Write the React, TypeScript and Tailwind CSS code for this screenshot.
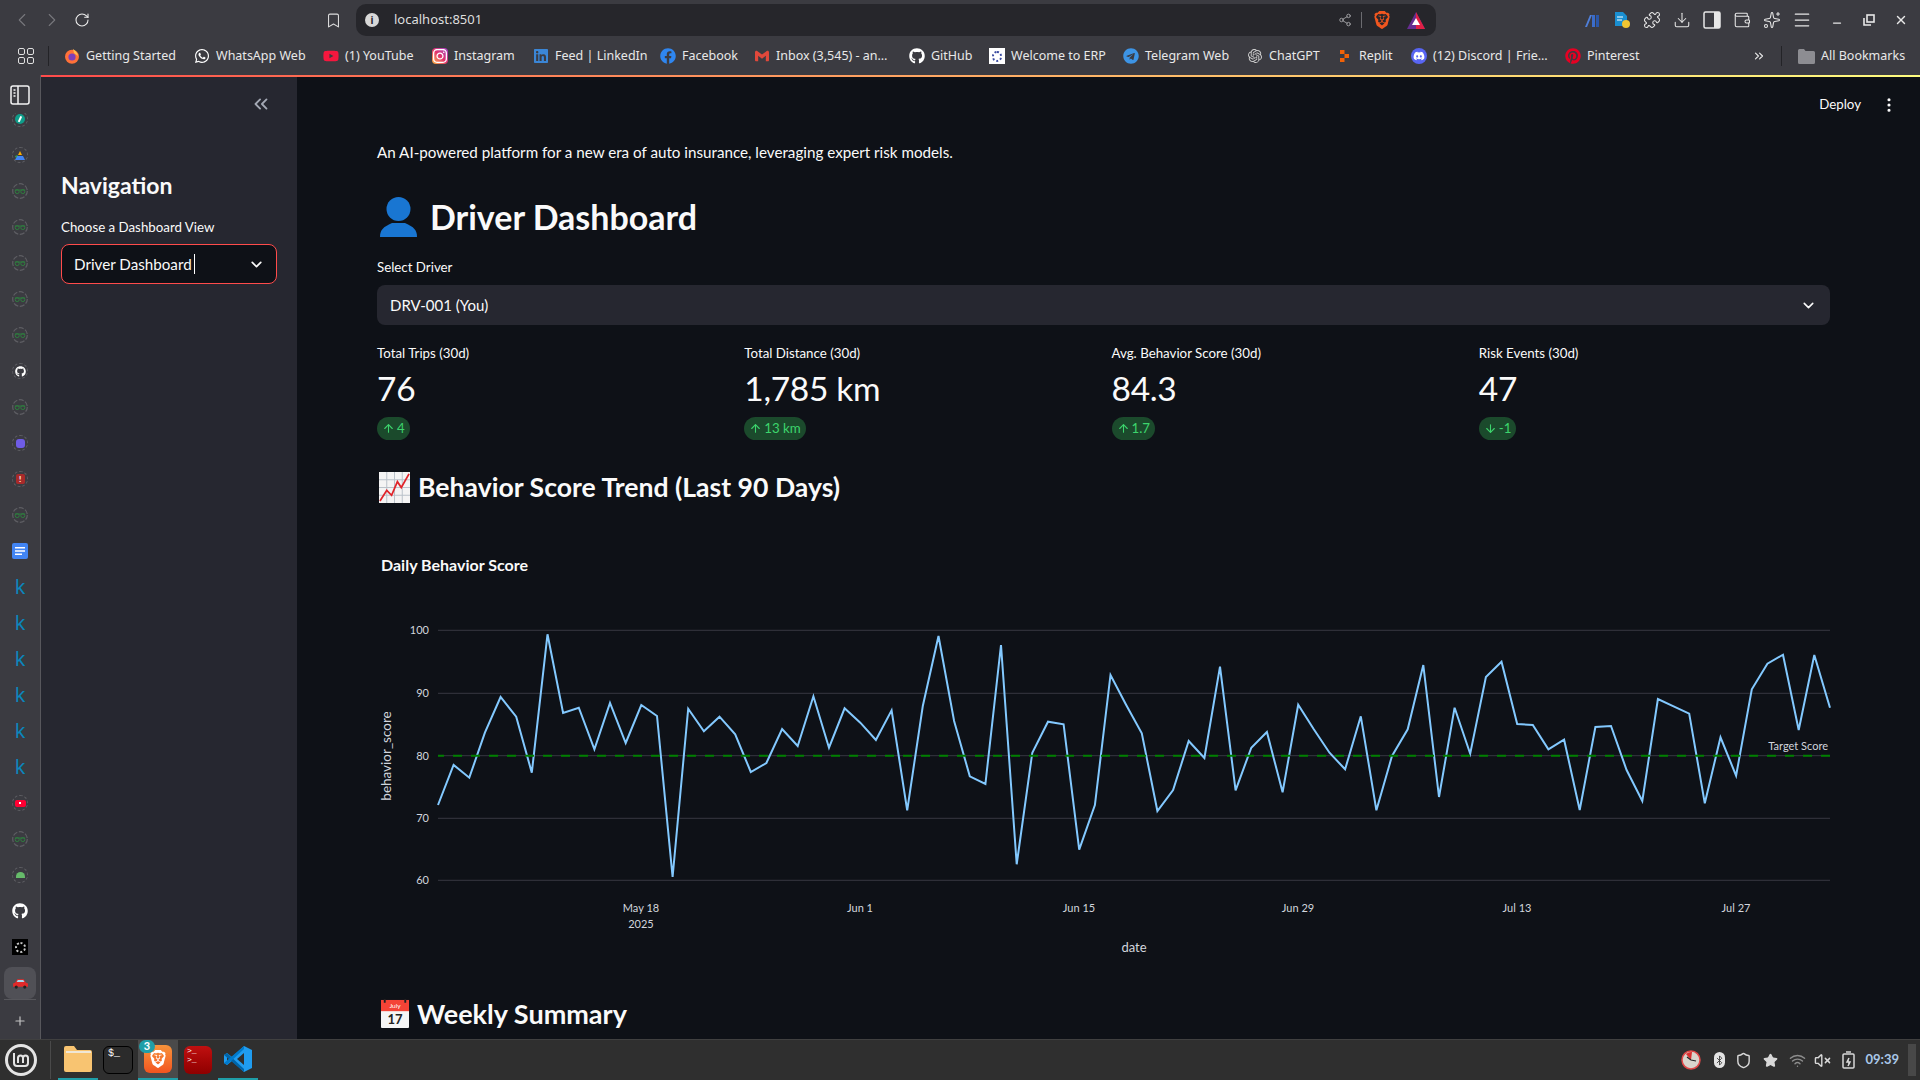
import React from "react";
import { ChevronLeft, ChevronRight, RotateCw, Bookmark, Share2, Puzzle, Download, Wallet, Sparkles, Menu, Minus, X, ChevronsLeft, ChevronDown, ChevronsRight, MoreVertical, ArrowUp, ArrowDown, Plus, Bluetooth, Shield, Star, Wifi, VolumeX } from "lucide-react";
import { FaWhatsapp, FaYoutube, FaInstagram, FaLinkedin, FaFacebook, FaGithub, FaTelegram, FaDiscord, FaPinterest } from "react-icons/fa";
import { SiOpenai, SiGmail, SiBrave } from "react-icons/si";

const zy = [612,492,530,395,288,347,515,100,336,320,445,306,426,312,345,828,323,391,347,400,513,486,384,435,286,440,322,365,417,328,628,315,105,360,526,549,132,790,455,362,370,746,612,222,312,397,630,567,420,471,197,568,440,393,574,311,385,455,505,346,628,465,385,192,588,320,458,228,182,369,372,445,416,627,378,375,507,600,294,316,338,607,409,524,265,188,161,387,162,320];
const pts = zy.map((y, i) => `${(438 + 15.64 * i).toFixed(1)},${(600 + y / 3).toFixed(1)}`).join(" ");

const Glasses = () => (
  <svg width="16" height="16" viewBox="0 0 16 16">
    <circle cx="8" cy="8" r="7.3" fill="none" stroke="#5e5e63" strokeWidth="1.2" strokeDasharray="5 1.6" />
    <circle cx="5.2" cy="8.6" r="2" fill="none" stroke="#2f7d3e" strokeWidth="1" />
    <circle cx="10.8" cy="8.6" r="2" fill="none" stroke="#2f7d3e" strokeWidth="1" />
    <path d="M2.8 7h10.4" stroke="#2f7d3e" strokeWidth="1" />
  </svg>
);
const Ring = ({ children }: { children: React.ReactNode }) => (
  <span className="relative flex h-4 w-4 items-center justify-center rounded-full border border-dashed border-[#5e5e63]">{children}</span>
);

const Strip = () => {
  const items: React.ReactNode[] = [
    <Ring><span className="flex h-[10px] w-[10px] items-center justify-center rounded-full bg-[#0f9d8a]"><span className="block h-[6px] w-[1.5px] rotate-[25deg] bg-white" /></span></Ring>,
    <Ring><svg width="10" height="9" viewBox="0 0 10 9"><path d="M5 0l2 4H3z" fill="#f9ab00" /><path d="M0 9l2-4h6l2 4z" fill="#4285f4" /><path d="M3 4L1 7 0 5z" fill="#34a853" /><path d="M7 4l3 3-2-2z" fill="#ea4335" /></svg></Ring>,
    <Glasses />, <Glasses />, <Glasses />, <Glasses />, <Glasses />,
    <Ring><FaGithub className="text-[11px] text-white" /></Ring>,
    <Glasses />,
    <Ring><span className="block h-[9px] w-[9px] rounded-[3px] bg-[#6f5ce6]" /></Ring>,
    <Ring><span className="block h-[10px] w-[9px] rounded-[2px] bg-[#a82a2a] text-center text-[8px] font-bold leading-[10px] text-white">!</span></Ring>,
    <Glasses />,
    <svg width="16" height="16" viewBox="0 0 16 16"><rect width="16" height="16" rx="2" fill="#4285f4" /><path d="M3 4h10v1.600H3zM3 7.200h10v1.600H3zM3 10.400h7V12H3z" fill="#fff" /></svg>,
    ...[0, 1, 2, 3, 4, 5].map(() => <span className="text-[20px] leading-none text-[#0b86bd] [font-family:'Noto_Sans',sans-serif]">k</span>),
    <Ring><span className="flex h-[7px] w-[11px] items-center justify-center rounded-[2px] bg-[#ff0033]"><span className="h-[2px] w-[2px] bg-white" /></span></Ring>,
    <Glasses />,
    <Ring><span className="block h-[6px] w-[9px] rounded-t-full bg-[#66bb6a]" /></Ring>,
    <FaGithub className="text-[16px] text-white" />,
    <span className="flex h-4 w-4 items-center justify-center bg-black"><span className="block h-[11px] w-[11px] rounded-full border-2 border-dotted border-[#c8c8c8]" /></span>,
  ];
  return (
    <div className="flex w-[41px] shrink-0 flex-col border-r border-[#57575c] bg-[#3b3b41]">
      <div className="flex h-[38px] shrink-0 items-center justify-center pt-[2px]">
        <svg width="20" height="20" viewBox="0 0 20 20" fill="none" stroke="#f4f4f4" strokeWidth="1.5"><rect x="1" y="1" width="18" height="18" rx="2" /><path d="M8 1v18" /><path d="M3.500 5h2M3.500 8h2M3.500 11h2" /></svg>
      </div>
      <div className="flex min-h-0 flex-1 flex-col items-center overflow-hidden">
        <div className="-mt-[12px]" />
        {items.map((n, i) => (
          <div key={i} className="flex h-[36px] w-full shrink-0 items-center justify-center">{n}</div>
        ))}
        <div className="mt-[2px] flex h-[32px] w-[32px] shrink-0 items-center justify-center rounded-[8px] bg-[#505056]">
          <svg width="17" height="11" viewBox="0 0 16 10"><path d="M1 5l2-1 2-3h6l2 3 2 1v3H1z" fill="#e12a2a" /><path d="M5.500 1.700h5l1.200 2H4.400z" fill="#a7d8ee" /><circle cx="4" cy="8.400" r="1.500" fill="#222" /><circle cx="12" cy="8.400" r="1.500" fill="#222" /></svg>
        </div>
        <div className="h-px w-[32px] shrink-0 bg-[#57575c]" />
        <div className="flex h-[41px] shrink-0 items-center justify-center"><Plus size={14} className="text-[#c4c4c4]" /></div>
      </div>
    </div>
  );
};

const bookmarks: [React.ReactNode, string, string][] = [
  [<svg width="16" height="16" viewBox="0 0 16 16"><circle cx="8" cy="8.700" r="7" fill="#ff7139" /><circle cx="8" cy="9" r="3.600" fill="#7d3fbb" /><path d="M9 1c2 1.600 4.500 3 5 7L10 5z" fill="#ffbd4f" /></svg>, "Getting Started", "w-[130px]"],
  [<FaWhatsapp className="text-[16px] text-white" />, "WhatsApp Web", "w-[129px]"],
  [<FaYoutube className="text-[16px] text-[#f5173e]" />, "(1) YouTube", "w-[109px]"],
  [<span className="rounded-[4px] bg-gradient-to-tr from-[#fdb42d] via-[#e1306c] to-[#a13bc9]"><FaInstagram className="text-[16px] text-white" /></span>, "Instagram", "w-[101px]"],
  [<FaLinkedin className="text-[16px] text-[#3b86d6]" />, "Feed | LinkedIn", "w-[127px]"],
  [<FaFacebook className="text-[16px] text-[#2f86f0]" />, "Facebook", "w-[94px]"],
  [<SiGmail className="text-[14px] text-[#e1483b]" />, "Inbox (3,545) - an…", "w-[155px]"],
  [<FaGithub className="text-[16px] text-white" />, "GitHub", "w-[80px]"],
  [<span className="flex h-4 w-4 items-center justify-center bg-white"><span className="block h-[11px] w-[10px] rounded-full border-2 border-dotted border-[#3a4aa0]" /></span>, "Welcome to ERP", "w-[134px]"],
  [<FaTelegram className="text-[16px] text-[#3d94e5]" />, "Telegram Web", "w-[124px]"],
  [<SiOpenai className="text-[14px] text-[#d0d0d0]" />, "ChatGPT", "w-[90px]"],
  [<svg width="14" height="14" viewBox="0 0 14 14" fill="#f26207"><path d="M2 1h4.500v4H2zM6.500 5H11v4H6.500zM2 9h4.500v4H2z" /></svg>, "Replit", "w-[74px]"],
  [<FaDiscord className="rounded-full bg-[#5865f2] p-[2px] text-[16px] text-white" />, "(12) Discord | Frie…", "w-[154px]"],
  [<FaPinterest className="text-[16px] text-[#e60023]" />, "Pinterest", "w-[70px]"],
];

const Chrome = () => (
  <div className="h-[75px] shrink-0 bg-[#3b3b41] text-[#e8e8e8] [font-family:'Noto_Sans',sans-serif]">
    <div className="flex h-[38px] items-center pl-[7px] pt-[2px]">
      <span className="flex w-[30px] justify-center"><ChevronLeft size={22} strokeWidth={1.2} className="text-[#77777c]" /></span>
      <span className="flex w-[30px] justify-center"><ChevronRight size={22} strokeWidth={1.2} className="text-[#77777c]" /></span>
      <span className="flex w-[30px] justify-center"><RotateCw size={16} strokeWidth={1.6} className="text-[#ececec]" /></span>
      <span className="ml-[221px] flex w-[30px] justify-center"><Bookmark size={17} strokeWidth={1.5} className="text-[#dcdcdc]" /></span>
      <div className="ml-[8px] flex h-[32px] w-[1080px] items-center rounded-[10px] bg-[#26262b] pl-[9px]">
        <span className="flex h-[14px] w-[14px] items-center justify-center rounded-full bg-[#d8d8d8] text-[10px] font-bold leading-none text-[#26262b]">i</span>
        <span className="ml-[15px] text-[13px] text-[#dedede]">localhost:8501</span>
        <Share2 size={14} strokeWidth={1.5} className="ml-auto text-[#a8a8ac]" />
        <span className="ml-[9px] h-[16px] w-px bg-[#6b6b70]" />
        <SiBrave className="ml-[11px] text-[18px] text-[#f1561f]" />
        <svg className="ml-[16px] mr-[11px]" width="18" height="17" viewBox="0 0 18 17"><path d="M9 0l9 17H0z" fill="#662d91" /><path d="M9 0l9 17H9z" fill="#e02045" /><path d="M9 6l4 7H5z" fill="#fff" /></svg>
      </div>
      <span className="ml-[141px] flex w-[30px] justify-center">
        <svg width="16" height="16" viewBox="0 0 16 16"><path d="M1 15L6 3h2L3 15z" fill="#4f7fd9" /><path d="M8 3h3v12H8z" fill="#3b6cc9" /><path d="M12 3h3v12h-3z" fill="#2a56a8" /></svg>
      </span>
      <span className="flex w-[30px] justify-center">
        <svg width="16" height="18" viewBox="0 0 16 18"><path d="M1 1h8l4 4v10H1z" fill="#1a8fd1" /><path d="M3 6h6M3 9h5" stroke="#fff" strokeWidth="1" /><circle cx="12" cy="13" r="4" fill="#f1c531" /></svg>
      </span>
      <span className="flex w-[30px] justify-center"><Puzzle size={18} strokeWidth={1.4} /></span>
      <span className="flex w-[30px] justify-center"><Download size={18} strokeWidth={1.4} /></span>
      <span className="flex w-[30px] justify-center">
        <svg width="18" height="18" viewBox="0 0 18 18"><rect x="1" y="1" width="16" height="16" rx="1.500" fill="none" stroke="#e8e8e8" strokeWidth="1.500" /><rect x="11" y="1" width="6" height="16" fill="#e8e8e8" /></svg>
      </span>
      <span className="flex w-[30px] justify-center"><Wallet size={18} strokeWidth={1.4} /></span>
      <span className="flex w-[30px] justify-center"><Sparkles size={18} strokeWidth={1.4} /></span>
      <span className="flex w-[30px] justify-center"><Menu size={20} strokeWidth={1.5} /></span>
      <span className="ml-[4px] flex w-[32px] justify-center"><Minus size={12} strokeWidth={2.5} className="translate-y-[3px]" /></span>
      <span className="flex w-[32px] justify-center">
        <svg width="12" height="12" viewBox="0 0 12 12" fill="none" stroke="#e8e8e8" strokeWidth="1.600"><rect x="4" y="1" width="7" height="7" /><path d="M1 4v7h7" /></svg>
      </span>
      <span className="flex w-[32px] justify-center"><X size={14} strokeWidth={2.5} /></span>
    </div>
    <div className="flex h-[36px] items-center text-[12.5px]">
      <span className="ml-[18px] grid h-[16px] w-[16px] grid-cols-2 gap-[2px]">
        <i className="rounded-[2px] border border-[#e0e0e0]" /><i className="rounded-[2px] border border-[#e0e0e0]" /><i className="rounded-[2px] border border-[#e0e0e0]" /><i className="rounded-[2px] border border-[#e0e0e0]" />
      </span>
      <span className="ml-[14px] mr-[15px] h-[20px] w-px bg-[#232327]" />
      {bookmarks.map(([icon, label, w]) => (
        <div key={label} className={`flex shrink-0 items-center ${w}`}>
          <span className="flex w-[16px] shrink-0 justify-center">{icon}</span>
          <span className="ml-[6px] whitespace-nowrap">{label}</span>
        </div>
      ))}
      <ChevronsRight size={14} className="ml-[117px]" />
      <span className="ml-[15px] h-[20px] w-px bg-[#232327]" />
      <svg className="ml-[16px]" width="17" height="15" viewBox="0 0 17 15"><path d="M0 1.500A1.500 1.500 0 0 1 1.500 0H6l1.500 2h8A1.500 1.500 0 0 1 17 3.500V13.500A1.500 1.500 0 0 1 15.500 15H1.500A1.500 1.500 0 0 1 0 13.500z" fill="#8d8d92" /></svg>
      <span className="ml-[6px] whitespace-nowrap">All Bookmarks</span>
    </div>
  </div>
);

const Sidebar = () => (
  <aside className="flex w-[256px] shrink-0 flex-col bg-[#262730] pl-[20px] pr-[20px]">
    <div className="flex h-[54px] items-center justify-end pr-[5px]"><ChevronsLeft size={22} strokeWidth={2} className="text-[#a3a8b4]" /></div>
    <h2 className="mt-[36px] text-[23px] font-bold leading-[36px] text-[#fafafa]">Navigation</h2>
    <div className="mt-[14px] text-[13.3px] leading-[20px] text-[#fafafa]">Choose a Dashboard View</div>
    <div className="mt-[7px] flex h-[40px] items-center rounded-[8px] border border-[#ff4b4b] bg-[#0e1117] pl-[12px] pr-[11px] text-[15.2px] text-[#fafafa]">
      <span>Driver Dashboard</span><span className="ml-[2px] h-[20px] w-px bg-white" />
      <ChevronDown size={17} strokeWidth={2.4} className="ml-auto" />
    </div>
  </aside>
);

const metrics: [string, string, string, boolean][] = [
  ["Total Trips (30d)", "76", "4", true],
  ["Total Distance (30d)", "1,785 km", "13 km", true],
  ["Avg. Behavior Score (30d)", "84.3", "1.7", true],
  ["Risk Events (30d)", "47", "-1", false],
];

const Chart = () => (
  <svg className="mt-[32px] block h-[430px] w-[1453px] overflow-visible [font-family:Lato,sans-serif]" viewBox="377 540 1453 430">
    <text x="381" y="570" fill="#fafafa" fontSize="16" fontWeight="700">Daily Behavior Score</text>
    {[629.3, 692.3, 754.7, 817.3, 879.3].map((y, i) => (
      <g key={y}>
        <path d={`M438 ${y}H1830`} stroke="#373842" strokeWidth="1" />
        <text x="429" y={y + 4} textAnchor="end" fill="#d2d6dd" fontSize="11">{100 - i * 10}</text>
      </g>
    ))}
    <polyline points={pts} fill="none" stroke="#83c9ff" strokeWidth="2" />
    <path d="M438 754.700H1830" stroke="#008000" strokeWidth="2" strokeDasharray="9 9" strokeDashoffset="3" />
    <text x="1828" y="749" textAnchor="end" fill="#d2d6dd" fontSize="11">Target Score</text>
    {[["May 18", 641], ["Jun 1", 860], ["Jun 15", 1079], ["Jun 29", 1298], ["Jul 13", 1517], ["Jul 27", 1736]].map(([t, x]) => (
      <text key={t as string} x={x as number} y="911" textAnchor="middle" fill="#d2d6dd" fontSize="11">{t}</text>
    ))}
    <text x="641" y="927" textAnchor="middle" fill="#d2d6dd" fontSize="11">2025</text>
    <text x="1134" y="951" textAnchor="middle" fill="#d2d6dd" fontSize="13">date</text>
    <text transform="translate(391 755) rotate(-90)" textAnchor="middle" fill="#d2d6dd" fontSize="13.5">behavior_score</text>
  </svg>
);

const Main = () => (
  <main className="min-w-0 flex-1 overflow-hidden bg-[#0e1117] text-[#fafafa]">
    <div className="flex h-[54px] items-center justify-end pr-[22px] pt-[2px] text-[13.3px]">
      <span>Deploy</span><MoreVertical size={18} strokeWidth={2.2} className="ml-[19px]" />
    </div>
    <div className="pl-[80px] pr-[90px]">
      <p className="mt-[9px] text-[15.2px] leading-[24px]">An AI-powered platform for a new era of auto insurance, leveraging expert risk models.</p>
      <div className="mt-[24px] flex h-[58px] items-center pl-[3px]">
        <svg width="37" height="40" viewBox="0 0 37 40" fill="#1976d2"><ellipse cx="18.500" cy="12" rx="12" ry="12" /><path d="M0 40c0-7 3-10 12-14h13c9 4 12 7 12 14z" /></svg>
        <h1 className="ml-[13px] text-[34px] font-bold leading-none">Driver Dashboard</h1>
      </div>
      <div className="mt-[11px] text-[13.3px] leading-[20px]">Select Driver</div>
      <div className="mt-[8px] flex h-[40px] items-center rounded-[8px] bg-[#262730] pl-[13px] pr-[13px] text-[15px]">
        <span>DRV-001 (You)</span><ChevronDown size={17} strokeWidth={2.2} className="ml-auto" />
      </div>
      <div className="mt-[18px] grid grid-cols-4 gap-[16px]">
        {metrics.map(([l, v, d, up]) => (
          <div key={l}>
            <div className="text-[13.3px] leading-[20px]">{l}</div>
            <div className="mt-[4px] text-[33.5px] leading-[42px] tracking-[-0.3px]">{v}</div>
            <div className="mt-[8px] inline-flex h-[23px] items-center gap-[2px] rounded-full bg-[#1b4a2c] px-[5px] text-[13.3px] text-[#3dd56d]">
              {up ? <ArrowUp size={13} /> : <ArrowDown size={13} />}<span>{d}</span>
            </div>
          </div>
        ))}
      </div>
      <div className="mt-[24px] flex h-[44px] items-center pl-[2px]">
        <svg width="31" height="31" viewBox="0 0 32 32"><rect width="32" height="32" fill="#f4f4f4" /><path d="M0 8h32M0 16h32M0 24h32M8 0v32M16 0v32M24 0v32" stroke="#b8c0c8" strokeWidth="1" /><path d="M1 30l7-11 5 5 6-14 4 6 8-14" fill="none" stroke="#e0242a" strokeWidth="1.800" /></svg>
        <h2 className="ml-[8px] text-[26.6px] font-bold leading-none">Behavior Score Trend (Last 90 Days)</h2>
      </div>
      <Chart />
      <div className="mt-[20px] flex h-[44px] items-center pl-[4px]">
        <svg width="28" height="29" viewBox="0 0 30 31"><rect y="1" width="30" height="30" rx="1" fill="#f5f5f5" /><rect y="1" width="30" height="12" fill="#f44336" /><path d="M4 0v4M26 0v4" stroke="#222" strokeWidth="2" /><text x="15" y="10" textAnchor="middle" fontSize="7" fill="#fff">July</text><text x="15" y="27" textAnchor="middle" fontSize="14" fontWeight="700" fill="#222">17</text></svg>
        <h2 className="ml-[8px] text-[27px] font-bold leading-none">Weekly Summary</h2>
      </div>
    </div>
  </main>
);

const Taskbar = () => (
  <div className="flex h-[41px] shrink-0 items-center border-t border-[#404040] bg-[#2f2f2f]">
    <span className="ml-[5px] flex h-[32px] w-[32px] items-center justify-center rounded-full border-[3px] border-[#e4e4e4]">
      <svg width="18" height="16" viewBox="0 0 18 16" fill="none" stroke="#e4e4e4" strokeWidth="2"><path d="M2 1v10a3 3 0 0 0 3 3h8a3 3 0 0 0 3-3V6a2.500 2.500 0 0 0-5 0v5M11 6a2.500 2.500 0 0 0-5 0v5" /></svg>
    </span>
    <span className="ml-[13px] h-[38px] w-px bg-[#4a4a4a]" />
    <div className="ml-[7px] flex h-full items-stretch">
      <div className="relative flex w-[40px] items-center justify-center border-b-2 border-[#1f9ea8]">
        <svg width="28" height="26" viewBox="0 0 28 26"><path d="M0 2a2 2 0 0 1 2-2h8l3 4h13a2 2 0 0 1 2 2v18a2 2 0 0 1-2 2H2a2 2 0 0 1-2-2z" fill="#f8c471" /><path d="M2 5h25v2H2z" fill="#efe7d6" /></svg>
      </div>
      <div className="flex w-[40px] items-center justify-center">
        <div className="h-[28px] w-[30px] rounded-[6px] border border-black bg-[#2b2b2b] pl-[4px] text-[10px] leading-[14px] text-white [font-family:'Liberation_Mono',monospace]">$_</div>
      </div>
      <div className="relative flex w-[40px] items-center justify-center border-b-2 border-[#1f9ea8] bg-[#4a4a4a]">
        <div className="flex h-[28px] w-[28px] items-center justify-center rounded-[6px] bg-gradient-to-b from-[#f7933b] to-[#f2531f]"><SiBrave className="text-[18px] text-white" /></div>
        <span className="absolute left-[1px] top-0 flex h-[13px] w-[16px] items-center justify-center rounded-full bg-[#1f9ea8] text-[11px] font-bold text-white">3</span>
      </div>
      <div className="flex w-[40px] items-center justify-center">
        <div className="h-[28px] w-[28px] rounded-[6px] bg-gradient-to-b from-[#c01010] to-[#8f0000] pl-[3px] text-[8px] leading-[9px] text-white [font-family:'Liberation_Mono',monospace]">&gt;_<br />&gt;_</div>
      </div>
      <div className="flex w-[40px] items-center justify-center border-b-2 border-[#1f9ea8]">
        <svg width="28" height="28" viewBox="0 0 28 28"><path d="M20 1l8 4v18l-8 4-12-11-5 4-3-2v-8l3-2 5 4z" fill="#1f9cf0" /><path d="M20 8l-7 6 7 6z" fill="#2f2f2f" /><path d="M3 10l5 4-5 4z" fill="#2f2f2f" /><path d="M0 10l3-2 17 16v3z" fill="#0065a9" /><path d="M0 18l3 2L20 4V1z" fill="#007acc" /></svg>
      </div>
    </div>
    <div className="ml-auto flex items-center text-[#d8d8d8]">
      <svg width="20" height="20" viewBox="0 0 20 20"><circle cx="10" cy="10" r="9" fill="#d8d4cc" stroke="#e04848" strokeWidth="1.500" /><path d="M10 10L5 4a8 8 0 0 1 6-2z" fill="#d93030" /><path d="M10 10l-4-3M10 10l5 1" stroke="#222" strokeWidth="1.200" /></svg>
      <span className="ml-[13px] flex h-[16px] w-[11px] items-center justify-center rounded-full bg-[#e4e4e4]"><Bluetooth size={11} strokeWidth={1.8} className="text-[#333]" /></span>
      <Shield size={17} className="ml-[10px]" />
      <Star size={15} fill="currentColor" className="ml-[11px]" />
      <Wifi size={17} className="ml-[11px] text-[#8d8d8d]" />
      <VolumeX size={17} className="ml-[8px]" />
      <svg className="ml-[11px]" width="14" height="18" viewBox="0 0 14 18" fill="none" stroke="#d8d8d8" strokeWidth="1.500"><rect x="1" y="3" width="11" height="14" rx="1" /><path d="M4 1h5" /><path d="M7 7l-2 4h3l-2 4" fill="#d8d8d8" /></svg>
      <span className="ml-[9px] text-[13px] font-bold text-[#a9c7e8]">09:39</span>
      <span className="ml-[9px] mr-[4px] h-[32px] w-[8px] bg-[#484848]" />
    </div>
  </div>
);

export default function App() {
  return (
    <div className="flex h-[1080px] w-[1920px] flex-col overflow-hidden bg-[#0e1117] [font-family:Lato,sans-serif]">
      <Chrome />
      <div className="flex min-h-0 flex-1">
        <Strip />
        <div className="flex min-w-0 flex-1 flex-col">
          <div className="h-[2px] shrink-0 bg-gradient-to-r from-[#ff4b4b] to-[#fffd80]" />
          <div className="flex min-h-0 flex-1">
            <Sidebar />
            <Main />
          </div>
        </div>
      </div>
      <Taskbar />
    </div>
  );
}
